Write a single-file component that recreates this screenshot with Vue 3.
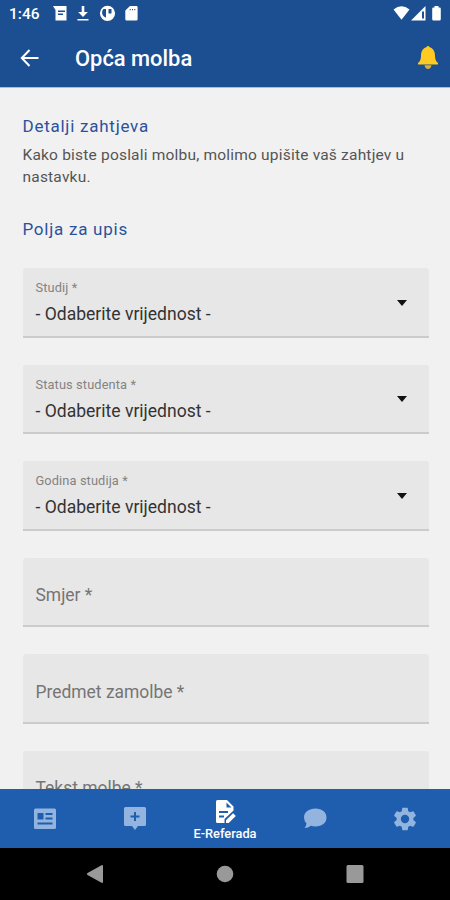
<script setup>
const fields = [
  { label: 'Studij *', select: true },
  { label: 'Status studenta *', select: true },
  { label: 'Godina studija *', select: true },
  { label: 'Smjer *', select: false },
  { label: 'Predmet zamolbe *', select: false },
  { label: 'Tekst molbe *', select: false },
]
</script>

<template>
  <div class="screen">
    <header class="top">
      <div class="status">
        <span class="time">1:46</span>
        <svg class="status-left" width="90" height="18" viewBox="0 0 90 18" fill="#fff">
          <path fill-rule="evenodd" d="M1 1h13.500v14.500H3.500V5zM6 5.500v1.500h7V5.500zm0 3v1.500h5V8.500z" />
          <path d="M29.700 1h2.600v6h3.600L31 12l-4.900-5h3.600zM25.500 14h11v1.600h-11z" />
          <path fill-rule="evenodd" d="M55.500.700a7.600 7.600 0 1 0 0 15.200 7.600 7.600 0 0 0 0-15.200zM51.500 4H54v8.700A5.300 5.300 0 0 1 51.500 4zm5 0h3v4.500h-3z" />
          <path fill-rule="evenodd" d="M78 1h6.300q1.300 0 1.300 1.300V14q0 1.500-1.300 1.500h-9.700q-1.300 0-1.300-1.500V5.500zm-.300 3v1.300h1V4zm2.300 0v1.300h1V4zm2.300 0v1.300h1V4z" />
        </svg>
        <svg class="status-right" width="50" height="18" viewBox="0 0 50 18" fill="#fff">
          <path d="M.500 4.500Q8.500-2 16.500 4.500L8.500 14.800z" />
          <path fill-rule="evenodd" d="M32.500 1v14.500h-14.500zM29 6.500v7h2v-7z" />
          <path d="M41.500 1h4v1.500h1q1.300 0 1.300 1.300V14q0 1.500-1.300 1.500h-6q-1.300 0-1.300-1.500V3.800q0-1.300 1.300-1.300h1z" />
        </svg>
      </div>
      <div class="appbar">
        <svg class="back" width="20" height="20" viewBox="0 0 20 20" fill="none" stroke="#fff" stroke-width="2">
          <path d="M18.500 10H2.500M9.500 2 1.800 10l7.700 8" />
        </svg>
        <h1>Opća molba</h1>
        <svg class="bell" width="22" height="25" viewBox="0 0 22 25">
          <path fill="#ffca22" d="M9.300 2.200q1.700-2.400 3.400 0C16.500 3.500 18 6.500 18 11q0 4.800 3 7v1.500H1V18q3-2.200 3-7c0-4.500 1.500-7.500 5.300-8.800z" />
          <path fill="#d9b13c" d="M7.500 20.300h7q-.7 3.700-3.500 3.700t-3.500-3.700z" />
        </svg>
      </div>
    </header>

    <main>
      <h2>Detalji zahtjeva</h2>
      <p class="intro">Kako biste poslali molbu, molimo upišite vaš zahtjev u nastavku.</p>
      <h2 class="form-title">Polja za upis</h2>
      <div class="fields">
        <div v-for="field in fields" :key="field.label" class="field" :class="{ select: field.select }">
          <div class="copy">
            <span class="label">{{ field.label }}</span>
            <span v-if="field.select" class="value">- Odaberite vrijednost -</span>
          </div>
          <svg v-if="field.select" width="10" height="6" viewBox="0 0 10 6"><path fill="#111" d="M0 0h10L5 6z" /></svg>
        </div>
      </div>
    </main>

    <nav class="tabs">
      <div class="tab">
        <svg width="24" height="24" viewBox="0 0 24 24">
          <path fill-rule="evenodd" d="M2.500 1.500h19q1.500 0 1.500 1.500v17.500q0 1.500-1.500 1.500h-19Q1 22 1 20.500V3q0-1.500 1.500-1.500zM4.500 6v6.500h6V6zm8 0v2h7V6zm0 4.500v2h7v-2zm-8 5v2h15v-2z" />
        </svg>
      </div>
      <div class="tab">
        <svg width="24" height="24" viewBox="0 0 24 24">
          <path fill-rule="evenodd" d="M2.500 0h19Q23 0 23 1.500v16q0 1.500-1.500 1.500H15l-3 4-3-4H2.500Q1 19 1 17.500v-16Q1 0 2.500 0zM11 5v3.500H7.500v2H11V14h2v-3.500h3.500v-2H13V5z" />
        </svg>
      </div>
      <div class="tab active">
        <svg width="24" height="24" viewBox="0 0 24 24">
          <path fill-rule="evenodd" d="M4.500 0H14l6.500 6.500v4L11.500 19v4h-7Q3 23 3 21.500v-20Q3 0 4.500 0zM13.500 2.500v5h5zM6 11v2h9v-2zm0 4.500v2h5v-2z" />
          <path d="M13 20.300l7.100-7.100 2.700 2.700-7.100 7.100H13z" />
        </svg>
        <span>E-Referada</span>
      </div>
      <div class="tab">
        <svg width="24" height="24" viewBox="0 0 24 24">
          <path d="M12.500 1.500C19 1.500 23.500 5 23.500 10.500S19 19.500 12.500 19.500q-2.600 0-4.800-.8-2.300 2.300-6.200 2.300 1.700-1.800 2-4.500Q1 14 1 10.500c0-5.500 5-9 11.500-9z" />
        </svg>
      </div>
      <div class="tab">
        <svg width="28" height="28" viewBox="0 0 24 24">
          <path d="M19.140 12.940c.04-.3.060-.61.060-.94 0-.32-.02-.64-.07-.94l2.030-1.580a.49.490 0 0 0 .12-.61l-1.920-3.320a.488.488 0 0 0-.59-.22l-2.390.96c-.5-.38-1.030-.7-1.620-.94l-.36-2.540a.484.484 0 0 0-.48-.41h-3.840a.47.470 0 0 0-.47.410l-.36 2.540c-.59.240-1.130.57-1.620.94l-2.390-.96a.47.470 0 0 0-.59.220L2.740 8.870c-.12.210-.08.470.12.610l2.030 1.580c-.05.300-.09.630-.09.940s.02.640.07.940l-2.030 1.580a.49.490 0 0 0-.12.610l1.920 3.320c.12.220.37.290.59.220l2.390-.96c.5.380 1.030.7 1.620.94l.36 2.540c.05.240.24.410.48.410h3.840c.24 0 .44-.17.470-.41l.36-2.540c.59-.24 1.130-.56 1.620-.94l2.390.96c.22.080.47 0 .59-.22l1.920-3.320a.47.470 0 0 0-.12-.61zM12 15.600A3.600 3.600 0 1 1 12 8.400a3.600 3.600 0 0 1 0 7.200z" />
        </svg>
      </div>
    </nav>
    <div class="system">
      <svg width="18" height="20" viewBox="0 0 18 20"><path d="M1.500 9 16 1q1 0 1 1v16q0 1-1 1L1.500 11q-1.500-1 0-2z" /></svg>
      <svg width="18" height="20" viewBox="0 0 18 20"><circle cx="9" cy="10" r="8.300" /></svg>
      <svg width="18" height="20" viewBox="0 0 18 20"><rect x=".5" y="1" width="17" height="18" rx="1.500" /></svg>
    </div>
  </div>
</template>

<style>
body { margin: 0; }
</style>

<style scoped>
.screen {
  width: 450px;
  height: 900px;
  display: flex;
  flex-direction: column;
  overflow: hidden;
  background: #f1f1f1;
  font-family: Roboto, "Liberation Sans", sans-serif;
}
svg { display: block; flex: none; }
.top { height: 88px; flex: none; background: #1b4f91; border-bottom: 1px solid #a9bed8; box-sizing: border-box; color: #fff; }
.status { display: flex; align-items: center; height: 28px; padding: 0 7px 0 9px; }
.time { width: 43px; font-size: 15.500px; font-weight: 500; line-height: 28px; }
.status-right { margin-left: auto; }
.appbar { display: flex; align-items: center; height: 60px; padding: 0 11px 0 20px; }
h1 { margin: 1px 0 0 35px; font-size: 21.900px; line-height: 30px; font-weight: 500; }
.bell { margin: -1px 0 0 auto; }
main { flex: 1; min-height: 0; overflow: hidden; padding: 26px 21.500px 0 22.500px; }
h2 { margin: 0; font-size: 17px; line-height: 24px; font-weight: 400; letter-spacing: .75px; color: #2b519b; }
.intro { margin: 6px 0 0; font-size: 15.500px; line-height: 22px; letter-spacing: .2px; color: #555; }
.form-title { margin-top: 29px; }
.fields { display: grid; gap: 27px; margin-top: 27px; }
.field {
  display: flex;
  align-items: center;
  justify-content: space-between;
  height: 69.600px;
  box-sizing: border-box;
  padding: 7px 21.500px 0 13px;
  border-bottom: 2px solid #cbcbcb;
  border-radius: 3px 3px 0 0;
  background: #e7e7e7;
}
.select { padding-top: 2px; }
.copy { display: flex; flex-direction: column; }
.label { font-size: 17.450px; line-height: 24px; color: #757575; }
.select .label { font-size: 12.800px; line-height: 18px; letter-spacing: .12px; color: #838383; }
.value { margin-top: 5px; font-size: 17.550px; line-height: 24px; color: #333; }
.tabs { display: grid; grid-template-columns: repeat(5, 1fr); height: 59px; flex: none; background: #1f5eae; }
.tab { display: flex; flex-direction: column; align-items: center; justify-content: center; padding-top: 1px; fill: #92b4df; }
.active { padding-top: 4px; fill: #fff; color: #fff; gap: 1px; }
.tab span { font-size: 12.800px; line-height: 17px; font-weight: 500; }
.system { display: flex; align-items: center; justify-content: center; gap: 112px; height: 52px; flex: none; background: #000; fill: #999; }
</style>
